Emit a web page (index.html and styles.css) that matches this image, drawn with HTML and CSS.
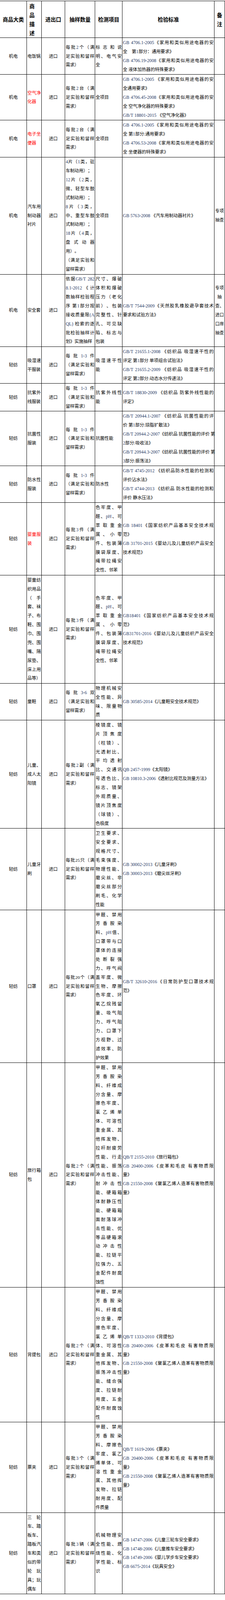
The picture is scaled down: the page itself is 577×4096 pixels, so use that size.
FILE: index.html
```html
<!DOCTYPE html>
<html lang="zh-CN">
<head>
<meta charset="utf-8">
<title>检验标准</title>
<link rel="stylesheet" href="styles.css">
</head>
<body>
<table class="sheet">
<colgroup>
<col class="w1"><col class="w2"><col class="w3"><col class="w4"><col class="w5"><col class="w6"><col class="w7">
</colgroup>
<tr class="hd">
<th>商品大类</th>
<th class="hl">商<br>品<br>描<br>述</th>
<th>进出口</th>
<th>抽样数量</th>
<th>检测项目</th>
<th>检验标准</th>
<th>备<br>注</th>
</tr>

<tr>
<td class="c">机电</td>
<td><span class="e">电饭锅</span></td>
<td class="c">进口</td>
<td><span class="j">每批<span class="n">2</span>个（满</span><span class="j">足实验和留样</span><span class="e">需求）</span></td>
<td><span class="j">标志和说</span><span class="j">明、电气安</span><span class="e">全</span></td>
<td><span class="j"><span class="n">GB 4706.1-2005</span>《家用和类似用途电器的安</span><span class="e">全　第<span class="n">1</span>部分：通用要求》</span><span class="j"><span class="n">GB 4706.19-2008</span>《家用和类似用途电器的安</span><span class="e">全 液体加热器的特殊要求》</span></td>
<td></td>
</tr>

<tr>
<td class="c">机电</td>
<td class="red"><span class="j">空气净</span><span class="e">化器</span></td>
<td class="c">进口</td>
<td><span class="j">每批<span class="n">2</span>台（满</span><span class="j">足实验和留样</span><span class="e">需求）</span></td>
<td><span class="e">全项目</span></td>
<td><span class="j"><span class="n">GB 4706.1-2005</span> 《家用和类似用途电器的安</span><span class="e">全通用要求》</span><span class="j"><span class="n">GB 4706.45-2008</span>《家用和类似用途电器的安</span><span class="e">全 空气净化器的特殊要求》</span><span class="e"><span class="n">GB/T 18801-2015</span> 《空气净化器》</span></td>
<td></td>
</tr>

<tr>
<td class="c">机电</td>
<td class="red"><span class="j">电子坐</span><span class="e">便器</span></td>
<td class="c">进口</td>
<td><span class="j">每批<span class="n">2</span>台（满</span><span class="j">足实验和留样</span><span class="e">需求）</span></td>
<td><span class="e">全项目</span></td>
<td><span class="j"><span class="n">GB 4706.1-2005</span>《家用和类似用途电器的安</span><span class="e">全 第<span class="n">1</span>部分:通用要求》</span><span class="j"><span class="n">GB 4706.53-2008</span>《家用和类似用途电器的安</span><span class="e">全 坐便器的特殊要求》</span></td>
<td></td>
</tr>

<tr>
<td class="c">机电</td>
<td><span class="j">汽车用</span><span class="j">制动器</span><span class="e">衬片</span></td>
<td class="c">进口</td>
<td><span class="j"><span class="n">4</span>片（<span class="n">1</span>类，驻</span><span class="e">车制动用）；</span><span class="j"><span class="n">12</span>片（<span class="n">2</span>类，</span><span class="j">微、轻型车鼓</span><span class="e">式制动用）；</span><span class="j"><span class="n">8</span>片（<span class="n">3</span>类，</span><span class="j">中、重型车鼓</span><span class="e">式制动用）；</span><span class="j"><span class="n">18</span>片（<span class="n">4</span>类，</span><span class="j">盘式动器</span><span class="e">用）。</span><span class="j">（满足实验和</span><span class="e">留样需求）</span></td>
<td><span class="e">全项目</span></td>
<td><span class="e"><span class="n">GB 5763-2008</span> 《汽车用制动器衬片》</span></td>
<td class="c">专项<br>抽查</td>
</tr>

<tr>
<td class="c">机电</td>
<td><span class="e">安全套</span></td>
<td class="c">进口</td>
<td><span class="j">依据<span class="n">GB/T 282</span></span><span class="j"><span class="n">8.1-2012</span>《计</span><span class="j">数抽样检验程</span><span class="j">序 第<span class="n">1</span>部分按</span><span class="j">接收质量限<span class="n">(A</span></span><span class="j"><span class="n">QL)</span> 检索的逐</span><span class="j">批检验抽样计</span><span class="e">划》实施抽样</span></td>
<td><span class="j">尺寸、爆破</span><span class="j">体积和爆破</span><span class="j">压力（老化</span><span class="j">前）、包装</span><span class="j">完整性、针</span><span class="j">孔、可见缺</span><span class="j">陷、标志与</span><span class="e">包装</span></td>
<td><span class="j"><span class="n">GB/T 7544-2009</span>《天然胶乳橡胶避孕套技术</span><span class="e">要求和试验方法》</span></td>
<td class="c">专项<br>抽<br>查、<br>进口<br>口岸<br>抽查</td>
</tr>

<tr>
<td class="c">轻纺</td>
<td><span class="j">吸湿速</span><span class="e">干服装</span></td>
<td class="c">进口</td>
<td><span class="j">每批<span class="n">1-3</span>件</span><span class="j">（满足实验和</span><span class="e">留样需求）</span></td>
<td><span class="j">吸湿速干性</span><span class="e">能</span></td>
<td><span class="j"><span class="n">GB/T 21655.1-2008</span> 《纺织品 吸湿速干性的</span><span class="e">评定 第<span class="n">1</span>部分 单项组合试验法》</span><span class="j"><span class="n">GB/T 21655.2-2009</span> 《纺织品 吸湿速干性的</span><span class="e">评定 第<span class="n">2</span>部分:动态水分传递法》</span></td>
<td></td>
</tr>

<tr>
<td class="c">轻纺</td>
<td><span class="j">抗紫外</span><span class="e">线服装</span></td>
<td class="c">进口</td>
<td><span class="j">每批<span class="n">1-3</span>件</span><span class="j">（满足实验和</span><span class="e">留样需求）</span></td>
<td><span class="j">抗紫外线性</span><span class="e">能</span></td>
<td><span class="j"><span class="n">GB/T 18830-2009</span> 《纺织品 防紫外线性能的</span><span class="e">评定》</span></td>
<td></td>
</tr>

<tr>
<td class="c">轻纺</td>
<td><span class="j">抗菌性</span><span class="e">服装</span></td>
<td class="c">进口</td>
<td><span class="j">每批<span class="n">1-3</span>件</span><span class="j">（满足实验和</span><span class="e">留样需求）</span></td>
<td><span class="e">抗菌性能</span></td>
<td><span class="j"><span class="n">GB/T 20944.1-2007</span> 《纺织品 抗菌性能的评</span><span class="e">价 第<span class="n">1</span>部分:琼脂扩散法》</span><span class="e"><span class="n">GB/T 20944.2-2007</span>《纺织品 抗菌性能的评价 第</span><span class="e"><span class="n">2</span>部分:吸收法》</span><span class="e"><span class="n">GB/T 20944.3-2007</span>《纺织品 抗菌性能的评价 第</span><span class="e"><span class="n">3</span>部分:振荡法》</span></td>
<td></td>
</tr>

<tr>
<td class="c">轻纺</td>
<td><span class="j">防水性</span><span class="e">服装</span></td>
<td class="c">进口</td>
<td><span class="j">每批<span class="n">1-3</span>件</span><span class="j">（满足实验和</span><span class="e">留样需求）</span></td>
<td><span class="e">防水性</span></td>
<td><span class="j"><span class="n">GB/T 4745-2012</span> 《纺织品防水性能的检测和</span><span class="e">评价沾水法》</span><span class="j"><span class="n">GB/T 4744-2013</span> 《纺织品 防水性能的检测和</span><span class="e">评价 静水压法》</span></td>
<td></td>
</tr>

<tr>
<td class="c">轻纺</td>
<td class="red"><span class="j">婴童服</span><span class="e">装</span></td>
<td class="c">进口</td>
<td><span class="j">每批<span class="n">3</span>件（满</span><span class="j">足实验和留样</span><span class="e">需求）</span></td>
<td><span class="j">色牢度、甲</span><span class="j">醛、<span class="n">pH</span>、可</span><span class="j">萃取重金</span><span class="j">属、小零</span><span class="j">件、包装薄</span><span class="j">膜袋厚度、</span><span class="j">绳带拉绳安</span><span class="e">全性、邻苯</span></td>
<td><span class="j"><span class="n">GB 18401</span>《国家纺织产品基本安全技术规</span><span class="e">范》</span><span class="j"><span class="n">GB 31701-2015</span>《婴幼儿及儿童纺织产品安全</span><span class="e">技术规范》</span></td>
<td></td>
</tr>

<tr>
<td class="c">轻纺</td>
<td><span class="j">婴童纺</span><span class="j">织用品</span><span class="j">（手</span><span class="j">套、袜</span><span class="j">子、布</span><span class="j">鞋、围</span><span class="j">巾、围</span><span class="j">兜、围</span><span class="j">嘴、隔</span><span class="j">尿垫、</span><span class="j">床上用</span><span class="e">品等）</span></td>
<td class="c">进口</td>
<td><span class="j">每批<span class="n">3</span>件（满</span><span class="j">足实验和留样</span><span class="e">需求）</span></td>
<td><span class="j">色牢度、甲</span><span class="j">醛、<span class="n">pH</span>、可</span><span class="j">萃取重金</span><span class="j">属、小零</span><span class="j">件、包装薄</span><span class="j">膜袋厚度、</span><span class="j">绳带拉绳安</span><span class="e">全性、邻苯</span></td>
<td><span class="j"><span class="n">GB18401</span>《国家纺织产品基本安全技术规</span><span class="e">范》</span><span class="j"><span class="n">GB31701-2016</span>《婴幼儿及儿童纺织产品安全</span><span class="e">技术规范》</span></td>
<td></td>
</tr>

<tr>
<td class="c">轻纺</td>
<td><span class="e">童鞋</span></td>
<td class="c">进口</td>
<td><span class="j">每批<span class="n">3-6</span>双</span><span class="j">（满足实验和</span><span class="e">留样需求）</span></td>
<td><span class="j">物理机械安</span><span class="j">全性能、异</span><span class="j">味、限量物</span><span class="e">质</span></td>
<td><span class="e"><span class="n">GB 30585-2014</span>《儿童鞋安全技术规范》</span></td>
<td></td>
</tr>

<tr>
<td class="c">轻纺</td>
<td><span class="j">儿童、</span><span class="j">成人太</span><span class="e">阳镜</span></td>
<td class="c">进口</td>
<td><span class="j">每批<span class="n">2</span>副（满</span><span class="j">足实验和留样</span><span class="e">需求）</span></td>
<td><span class="j">棱镜度、镜</span><span class="j">片顶焦度</span><span class="j">（柱镜）、</span><span class="j">光透射比、</span><span class="j">平均透射</span><span class="j">比、交通讯</span><span class="j">号透色比、</span><span class="j">标志、镜架</span><span class="j">外观质量、</span><span class="j">镜片顶焦度</span><span class="j">（球镜）、</span><span class="e">色极度</span></td>
<td><span class="e"><span class="n">QB 2457-1999</span>《太阳镜》</span><span class="e"><span class="n">GB 10810.3-2006</span>《透射比规范及测量方法》</span></td>
<td></td>
</tr>

<tr>
<td class="c">轻纺</td>
<td><span class="j">儿童牙</span><span class="e">刷</span></td>
<td class="c">进口</td>
<td><span class="j">每批25只（满</span><span class="j">足实验和留样</span><span class="e">需求）</span></td>
<td><span class="j">卫生要求、</span><span class="j">安全要求、</span><span class="j">规格尺寸、</span><span class="j">毛束强度、</span><span class="j">物理性能、</span><span class="j">磨尖丝、非</span><span class="j">磨尖丝部分</span><span class="j">刷毛、化学</span><span class="e">性能</span></td>
<td><span class="e"><span class="n">GB 30002-2013</span>《儿童牙刷》</span><span class="e"><span class="n">GB 30003-2013</span>《磨尖丝牙刷》</span></td>
<td></td>
</tr>

<tr>
<td class="c">轻纺</td>
<td><span class="e">口罩</span></td>
<td class="c">进口</td>
<td><span class="j">每批20个（满</span><span class="j">足实验和留样</span><span class="e">需求）</span></td>
<td><span class="j">甲醛、禁用</span><span class="j">芳香胺染</span><span class="j">料、<span class="n">pH</span>值、</span><span class="j">口罩带与口</span><span class="j">罩体的连接</span><span class="j">处断裂强</span><span class="j">力、呼气阀</span><span class="j">盖牢度、微</span><span class="j">生物、摩擦</span><span class="j">色牢度、环</span><span class="j">氧乙烷残留</span><span class="j">量、吸气阻</span><span class="j">力、呼气阻</span><span class="j">力、口罩下</span><span class="j">方视野、过</span><span class="j">滤效率、防</span><span class="e">护效果</span></td>
<td><span class="j"><span class="n">GB/T 32610-2016</span>《日常防护型口罩技术规</span><span class="e">范》</span></td>
<td></td>
</tr>

<tr>
<td class="c">轻纺</td>
<td><span class="j">旅行箱</span><span class="e">包</span></td>
<td class="c">进口</td>
<td><span class="j">每批<span class="n">2</span>个（满</span><span class="j">足实验和留样</span><span class="e">需求）</span></td>
<td><span class="j">甲醛、禁用</span><span class="j">芳香胺染</span><span class="j">料、纤维成</span><span class="j">分含量、摩</span><span class="j">擦色牢度、</span><span class="j">氯乙烯单</span><span class="j">体、可溶性</span><span class="j">重金属、其</span><span class="j">他挥发物、</span><span class="j">拉杆耐疲劳</span><span class="j">性能、行走</span><span class="j">性能、振荡</span><span class="j">冲击性能、</span><span class="j">耐冲击性</span><span class="j">能、硬箱箱</span><span class="j">体耐静压性</span><span class="j">能、硬箱箱</span><span class="j">面耐落球冲</span><span class="j">击性能、优</span><span class="j">等品硬箱滚</span><span class="j">动冲击性</span><span class="j">能、拉链平</span><span class="j">拉强力、五</span><span class="j">金配件耐腐</span><span class="e">蚀性</span></td>
<td><span class="e"><span class="n">QB/T 2155-2010</span>《旅行箱包》</span><span class="j"><span class="n">GB 20400-2006</span>《皮革和毛皮 有害物质限</span><span class="e">量》</span><span class="j"><span class="n">GB 21550-2008</span>《聚氯乙烯人造革有害物质限</span><span class="e">量》</span></td>
<td></td>
</tr>

<tr>
<td class="c">轻纺</td>
<td><span class="e">背提包</span></td>
<td class="c">进口</td>
<td><span class="j">每批<span class="n">2</span>个（满</span><span class="j">足实验和留样</span><span class="e">需求）</span></td>
<td><span class="j">甲醛、禁用</span><span class="j">芳香胺染</span><span class="j">料、纤维成</span><span class="j">分含量、摩</span><span class="j">擦色牢度、</span><span class="j">氯乙烯单</span><span class="j">体、可溶性</span><span class="j">重金属、其</span><span class="j">他挥发物、</span><span class="j">振荡冲击性</span><span class="j">能、缝合强</span><span class="j">度、拉链耐</span><span class="j">用度、五金</span><span class="j">配件耐腐蚀</span><span class="e">性</span></td>
<td><span class="e"><span class="n">QB/T 1333-2010</span>《背提包》</span><span class="j"><span class="n">GB 20400-2006</span>《皮革和毛皮 有害物质限</span><span class="e">量》</span><span class="j"><span class="n">GB 21550-2008</span>《聚氯乙烯人造革有害物质限</span><span class="e">量》</span></td>
<td></td>
</tr>

<tr>
<td class="c">轻纺</td>
<td><span class="e">票夹</span></td>
<td class="c">进口</td>
<td><span class="j">每批<span class="n">3</span>个（满</span><span class="j">足实验和留样</span><span class="e">需求）</span></td>
<td><span class="j">甲醛、禁用</span><span class="j">芳香胺染</span><span class="j">料、摩擦色</span><span class="j">牢度、氯乙</span><span class="j">烯单体、可</span><span class="j">溶性重金</span><span class="j">属、其他挥</span><span class="j">发物、拉链</span><span class="j">耐用度、配</span><span class="e">件质量</span></td>
<td><span class="e"><span class="n">QB/T 1619-2006</span>《票夹》</span><span class="j"><span class="n">GB 20400-2006</span>《皮革和毛皮 有害物质限</span><span class="e">量》</span><span class="j"><span class="n">GB 21550-2008</span>《聚氯乙烯人造革有害物质限</span><span class="e">量》</span></td>
<td></td>
</tr>

<tr>
<td class="c">轻纺</td>
<td><span class="j">三轮</span><span class="j">车、踏</span><span class="j">板车、</span><span class="j">踏板汽</span><span class="j">车和类</span><span class="j">似的带</span><span class="j">轮玩</span><span class="j">具；玩</span><span class="e">偶车</span></td>
<td class="c">进口</td>
<td><span class="j">每批<span class="n">3</span>辆（满</span><span class="j">足实验和留样</span><span class="e">需求）</span></td>
<td><span class="j">机械物理安</span><span class="j">全性能、燃</span><span class="j">烧性能、化</span><span class="j">学性能、标</span><span class="e">识</span></td>
<td><span class="e"><span class="n">GB 14747-2006</span>《儿童三轮车安全要求》</span><span class="e"><span class="n">GB 14748-2006</span>《儿童推车安全要求》</span><span class="e"><span class="n">GB 14749-2006</span>《婴儿学步车安全要求》</span><span class="e"><span class="n">GB 6675-2014</span>《玩具安全》</span></td>
<td></td>
</tr>
</table>
</body>
</html>
```

FILE: styles.css
```css
html, body {
  margin: 0;
  padding: 0;
  background: #ffffff;
}

body {
  font-family: "Liberation Serif", "Noto Sans CJK SC", serif;
  color: #000000;
}

.sheet {
  border-collapse: collapse;
  table-layout: fixed;
  width: 576.7px;
  margin-top: 2.3px;
}

.w1 { width: 68.7px; }
.w2 { width: 37.6px; }
.w3 { width: 60.6px; }
.w4 { width: 76.8px; }
.w5 { width: 70.1px; }
.w6 { width: 235.6px; }
.w7 { width: 27.3px; }

.sheet th,
.sheet td {
  border: 1px solid #000000;
  padding: 0.8px 1px;
  vertical-align: middle;
  text-align: left;
  font-size: 11.35px;
  font-weight: normal;
  line-height: 22.88px;
  text-spacing-trim: space-all;
  text-autospace: no-autospace;
  overflow: visible;
}

.sheet tr > :first-child {
  border-left: none;
}

.hd th {
  font-family: "Noto Sans CJK SC", sans-serif;
  font-weight: bold;
  font-size: 13.6px;
  text-align: center;
}

.hd th.hl {
  text-align: left;
  padding-left: 6px;
}

.sheet td.c {
  text-align: center;
}

.red {
  color: #ff0000;
}

.j,
.e {
  display: block;
  white-space: nowrap;
}

.j {
  text-align: justify;
  text-align-last: justify;
}

.e {
  text-align: left;
}

.n {
  font-size: 11.7px;
  line-height: 1;
  color: #1f3864;
}
```
